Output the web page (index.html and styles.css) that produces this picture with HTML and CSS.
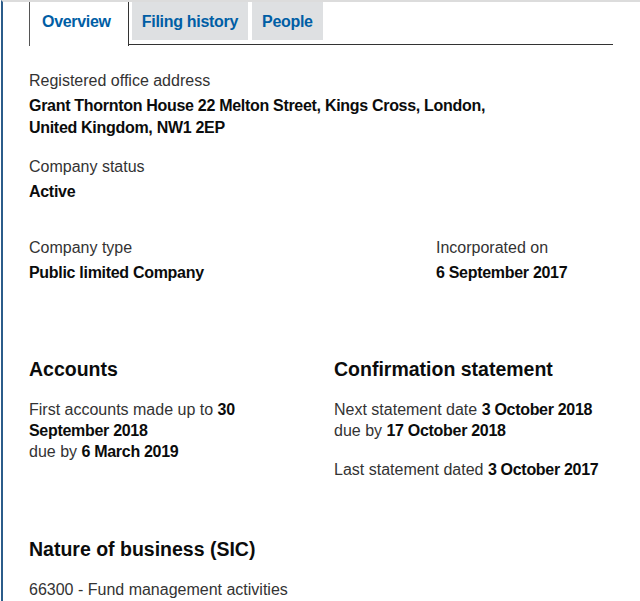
FILE: index.html
```html
<!DOCTYPE html>
<html lang="en">
<head>
  <meta charset="UTF-8">
  <title>Company overview</title>
  <link rel="stylesheet" href="styles.css">
</head>
<body>
  <div class="page">
    <ul class="tabs">
      <li class="tab active"><a href="#">Overview</a></li>
      <li class="tab"><a href="#">Filing history</a></li>
      <li class="tab"><a href="#">People</a></li>
    </ul>

    <div class="content">
      <dl class="field">
        <dt>Registered office address</dt>
        <dd>Grant Thornton House 22 Melton Street, Kings Cross, London,<br>United Kingdom, NW1 2EP</dd>
      </dl>

      <dl class="field status">
        <dt>Company status</dt>
        <dd>Active</dd>
      </dl>

      <div class="row row-type">
        <dl class="field">
          <dt>Company type</dt>
          <dd>Public limited Company</dd>
        </dl>
        <dl class="field">
          <dt>Incorporated on</dt>
          <dd>6 September 2017</dd>
        </dl>
      </div>

      <div class="row row-half">
        <div class="col first">
          <h2>Accounts</h2>
          <p>First accounts made up to <strong>30 September 2018</strong><br>due by <strong>6 March 2019</strong></p>
        </div>
        <div class="col">
          <h2>Confirmation statement</h2>
          <p>Next statement date <strong>3 October 2018</strong><br>due by <strong>17 October 2018</strong></p>
          <p class="last">Last statement dated <strong>3 October 2017</strong></p>
        </div>
      </div>

      <h2 class="sic-title">Nature of business (SIC)</h2>
      <p class="sic">66300 - Fund management activities</p>
    </div>
  </div>
</body>
</html>
```

FILE: styles.css
```css
* { box-sizing: border-box; }
body { margin: 0; font-family: "Liberation Sans", Arial, sans-serif; font-size: 16px; color: #0b0c0c; background: #fff; }
.page { border-left: 2px solid #2b5c8a; border-top: 2px solid #dcdcdc; min-height: 601px; margin-left: 1px; }

.tabs { list-style: none; margin: 0 27px 0 26px; padding: 0; display: flex; gap: 4px; border-bottom: 1px solid #333; height: 43px; align-items: flex-start; }
.tab { background: #dee0e2; height: 38px; }
.tab a { display: block; padding: 11px 10px 0; font-weight: bold; font-size: 16px; letter-spacing: -0.3px; color: #005ea5; text-decoration: none; }
.tab.active { background: #fff; height: 44px; border-left: 1px solid #555; border-right: 1px solid #333; margin-right: -1px; }
.tab.active a { padding: 11px 17px 0 12px; }

.content { padding: 0 27px 0 26px; color: #333; }
.field { margin: 0; }
.field dt { margin-top: 25px; line-height: 21px; color: #333; }
.field dd { margin: 4px 0 0; font-weight: bold; letter-spacing: -0.3px; color: #0b0c0c; line-height: 22px; }
.status dt { margin-top: 17px; }

.row { display: grid; }
.row-type { grid-template-columns: 407px 1fr; margin-top: 34px; }
.row-type .field dt { margin-top: 0; }
.row-half { grid-template-columns: 305px 1fr; margin-top: 73px; }
.col.first { padding-right: 30px; }

h2 { font-size: 19.5px; margin: 0; color: #0b0c0c; line-height: 24px; }
p { margin: 18px 0 0; line-height: 21px; }
strong { color: #0b0c0c; letter-spacing: -0.3px; }
p.last { margin-top: 18px; }

.sic-title { margin-top: 57px; }
.sic { margin-top: 18px; }
```
